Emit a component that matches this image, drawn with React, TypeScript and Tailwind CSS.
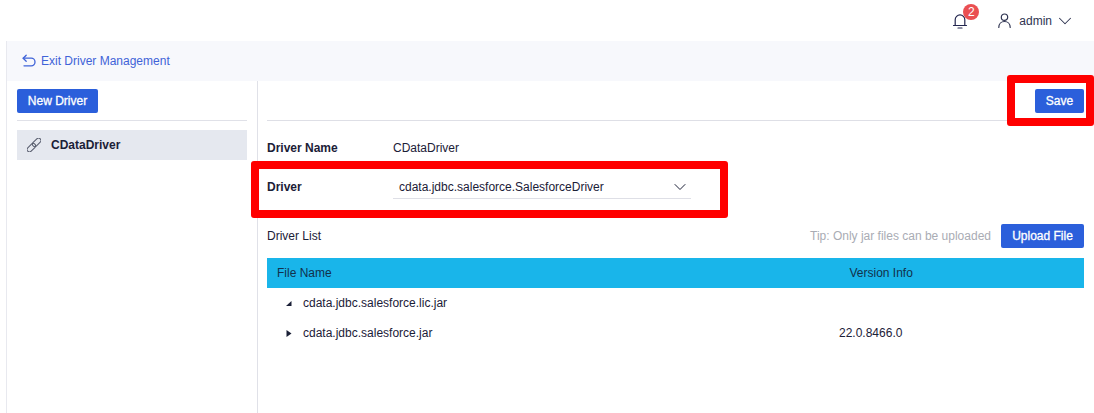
import React from 'react';
import { ChevronDown } from 'lucide-react';

const font = "font-['Liberation_Sans',Arial,sans-serif]";

const Button = ({ label, className }: { label: string; className: string }) => (
    <button className={`h-6 rounded-[2px] bg-[#2b5fdb] text-xs text-white [-webkit-text-stroke:0.3px_white] ${className}`}>{label}</button>
);

const BellIcon = () => (
    <svg className="h-[16px] w-[16px]" viewBox="0 0 16 16" fill="none" stroke="#23264f" strokeWidth="1.2" strokeLinecap="round">
        <path d="M1.5 12.5h13M3.2 12.5V6.7a4.8 4.8 0 0 1 9.6 0v5.8" />
        <path d="M6 15h4" />
    </svg>
);

const UserIcon = () => (
    <svg className="h-[15px] w-[15px]" viewBox="0 0 15 15" fill="none" stroke="#2e3350" strokeWidth="1.2" strokeLinecap="round">
        <circle cx="7.5" cy="4.2" r="3.2" />
        <path d="M1.8 14.5c0-3.6 2.5-6 5.7-6s5.7 2.4 5.7 6" />
    </svg>
);

const BackIcon = () => (
    <svg className="h-[14px] w-[14px]" viewBox="0 0 14 14" fill="none" stroke="#3f63d8" strokeWidth="1.3" strokeLinecap="round" strokeLinejoin="round">
        <path d="M4.2 1.2L1.2 4.2l3 3" />
        <path d="M1.2 4.2h8a3.6 3.6 0 0 1 0 7.6H2" />
    </svg>
);

const LinkIcon = () => (
    <svg className="h-[14px] w-[14px]" viewBox="0 0 14 14" fill="none" stroke="#555a6b" strokeWidth="1">
        <g transform="rotate(-45 7 7)">
            <rect x="-1.8" y="4.6" width="10" height="4.8" rx="2.4" />
            <rect x="5.8" y="4.6" width="10" height="4.8" rx="2.4" />
        </g>
    </svg>
);

export default function App() {
    return (
        <div className={`relative h-[413px] w-[1094px] overflow-hidden bg-white text-xs text-[#1b2037] ${font}`}>
            <header className="flex h-[41px] items-center justify-end pr-[18px]">
                <div className="relative mr-[29px] mt-[1px]">
                    <BellIcon />
                    <span className="absolute -right-[11px] -top-[9px] flex h-[16px] w-[16px] items-center justify-center rounded-full bg-[#ea4f52] text-[12px] text-white">2</span>
                </div>
                <div className="mr-[7px]">
                    <UserIcon />
                </div>
                <span className="mr-[2px] text-[#2e3350]">admin</span>
                <ChevronDown className="h-[22px] w-[22px] text-[#2e3350]" strokeWidth={1.1} />
            </header>

            <div className="ml-[6px] flex h-[372px] flex-col border-l border-[#e8e9ef]">
                <div className="flex h-[40px] shrink-0 items-center gap-[5px] bg-[#f7f8fc] pl-[15px] text-[#3f63d8]">
                    <BackIcon />
                    <span>Exit Driver Management</span>
                </div>

                <div className="flex flex-1">
                    <aside className="w-[251px] shrink-0 border-r border-[#e0e1e8] px-[10px] pt-2">
                        <Button label="New Driver" className="block w-[81px]" />
                        <div className="mt-[7px] border-t border-[#e0e1e8]" />
                        <div className="mt-[9px] flex h-[30px] items-center gap-[10px] bg-[#e5e8ef] pl-[10px] font-bold">
                            <LinkIcon />
                            <span>CDataDriver</span>
                        </div>
                    </aside>

                    <main className="flex-1 pl-[9px] pr-[10px] pt-2">
                        <div className="flex justify-end border-b border-[#dedfe6] pb-[7px]">
                            <Button label="Save" className="w-[49px]" />
                        </div>

                        <div className="mt-[18px] flex h-[18px] items-center">
                            <span className="w-[126px] font-bold">Driver Name</span>
                            <span>CDataDriver</span>
                        </div>

                        <div className="mt-[21px] flex h-[18px] items-center">
                            <span className="w-[126px] font-bold">Driver</span>
                            <div className="flex h-[24px] w-[298px] items-center justify-between border-b border-[#dedfe6] pl-[6px] pr-[1px]">
                                <span>cdata.jdbc.salesforce.SalesforceDriver</span>
                                <ChevronDown className="h-[20px] w-[20px]" strokeWidth={1.2} />
                            </div>
                        </div>

                        <div className="mt-[28px] flex h-6 items-center justify-between">
                            <span>Driver List</span>
                            <div className="flex items-center gap-[10px]">
                                <span className="text-[#a9acb4]">Tip: Only jar files can be uploaded</span>
                                <Button label="Upload File" className="w-[83px]" />
                            </div>
                        </div>

                        <div className="mt-[10px] flex h-[30px] items-center bg-[#19b5ea] text-[#12314c]">
                            <span className="ml-[10px] w-[572.5px]">File Name</span>
                            <span>Version Info</span>
                        </div>

                        <div className="flex h-[30px] items-center pl-[18px]">
                            <svg className="mr-[11px] h-[7px] w-[7px]" viewBox="0 0 7 7"><path d="M6.5 1v5H1z" fill="#1b2037" /></svg>
                            <span>cdata.jdbc.salesforce.lic.jar</span>
                        </div>
                        <div className="flex h-[30px] items-center pl-[18px]">
                            <svg className="mr-[11px] h-[7px] w-[7px]" viewBox="0 0 7 7"><path d="M1.5 0l5 3.5-5 3.5z" fill="#1b2037" /></svg>
                            <span className="w-[536px]">cdata.jdbc.salesforce.jar</span>
                            <span>22.0.8466.0</span>
                        </div>
                    </main>
                </div>
            </div>

            {/* annotation boxes drawn over the screenshot */}
            <div className="absolute left-[1007px] top-[75px] h-[51px] w-[87px] rounded-[3px] border-[8px] border-[#ff0000]" />
            <div className="absolute left-[251px] top-[161px] h-[57px] w-[477px] rounded-[3px] border-[8px] border-[#ff0000]" />
        </div>
    );
}
